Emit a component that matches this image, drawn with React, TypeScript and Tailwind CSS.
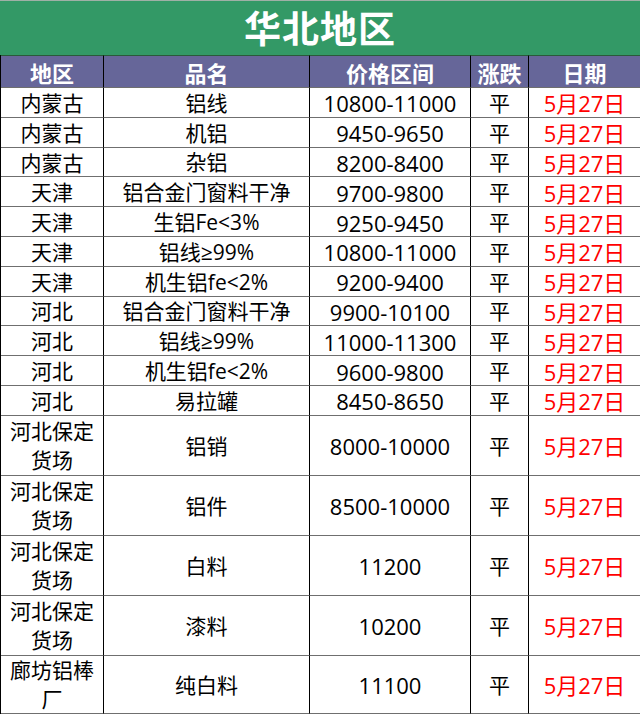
import React from 'react';

interface Row {
  region: string;
  name: string;
  price: string;
  tall?: boolean;
}

const rows: Row[] = [
  { region: '内蒙古', name: '铝线', price: '10800-11000' },
  { region: '内蒙古', name: '机铝', price: '9450-9650' },
  { region: '内蒙古', name: '杂铝', price: '8200-8400' },
  { region: '天津', name: '铝合金门窗料干净', price: '9700-9800' },
  { region: '天津', name: '生铝Fe<3%', price: '9250-9450' },
  { region: '天津', name: '铝线≥99%', price: '10800-11000' },
  { region: '天津', name: '机生铝fe<2%', price: '9200-9400' },
  { region: '河北', name: '铝合金门窗料干净', price: '9900-10100' },
  { region: '河北', name: '铝线≥99%', price: '11000-11300' },
  { region: '河北', name: '机生铝fe<2%', price: '9600-9800' },
  { region: '河北', name: '易拉罐', price: '8450-8650' },
  { region: '河北保定货场', name: '铝销', price: '8000-10000', tall: true },
  { region: '河北保定货场', name: '铝件', price: '8500-10000', tall: true },
  { region: '河北保定货场', name: '白料', price: '11200', tall: true },
  { region: '河北保定货场', name: '漆料', price: '10200', tall: true },
  { region: '廊坊铝棒厂', name: '纯白料', price: '11100', tall: true },
];

const font = { fontFamily: '"Open Sans", "Noto Sans CJK SC", sans-serif' };

const cell = 'flex items-center justify-center text-center border-r border-b border-r-black border-b-[#6f6f6f] pt-[2px]';

export default function App() {
  return (
    <div className="w-[640px] h-[715px] overflow-hidden bg-white" style={font}>
      <div className="h-[55px] bg-[#339966] border-t border-[#9fb0a6] flex items-center justify-center">
        <span className="text-white font-bold text-[37px] leading-none tracking-[1px]">华北地区</span>
      </div>
      <div className="grid grid-cols-[103px_206px_161px_58px_112px] border-l border-black">
        {['地区', '品名', '价格区间', '涨跌', '日期'].map((h) => (
          <div key={h} className={`${cell} h-[33px] bg-[#666699] text-white font-bold text-[22px] leading-none border-t border-t-[#2a5a3a]`}>
            {h}
          </div>
        ))}
        {rows.map((r, i) => {
          const h = r.tall ? (i === rows.length - 1 ? 'h-[58px]' : 'h-[60px]') : 'h-[29.8px]';
          return (
            <React.Fragment key={i}>
              <div className={`${cell} ${h} text-[21px] leading-[29px] text-black px-1`}>
                <span className={r.tall ? 'w-[90px]' : ''}>{r.region}</span>
              </div>
              <div className={`${cell} ${h} text-[21px] leading-none text-black whitespace-nowrap`}>{r.name}</div>
              <div className={`${cell} ${h} text-[22px] leading-none text-black`}>{r.price}</div>
              <div className={`${cell} ${h} text-[21px] leading-none text-black`}>平</div>
              <div className={`${cell} ${h} text-[22px] leading-none text-[#ff0000]`}>5月27日</div>
            </React.Fragment>
          );
        })}
      </div>
    </div>
  );
}
